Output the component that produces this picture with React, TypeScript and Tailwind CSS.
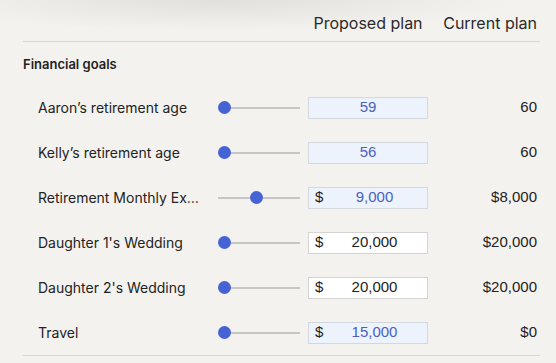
const goals = [
  { label: "Aaron’s retirement age", pos: 0, value: "59", prefix: false, changed: true, current: "60" },
  { label: "Kelly’s retirement age", pos: 0, value: "56", prefix: false, changed: true, current: "60" },
  { label: "Retirement Monthly Expenses", pos: 46, value: "9,000", prefix: true, changed: true, current: "$8,000" },
  { label: "Daughter 1's Wedding", pos: 0, value: "20,000", prefix: true, changed: false, current: "$20,000" },
  { label: "Daughter 2's Wedding", pos: 0, value: "20,000", prefix: true, changed: false, current: "$20,000" },
  { label: "Travel", pos: 0, value: "15,000", prefix: true, changed: true, current: "$0" },
]

const Slider = ({ pos }: { pos: number }) => (
  <div className="relative h-[13px] w-[82px]">
    <div className="absolute left-0 right-0 top-[5.5px] h-[2px] bg-[#c6c6c6]" />
    <div
      className="absolute top-0 h-[13px] w-[13px] rounded-full bg-[#4563d5]"
      style={{ left: `calc(${pos}% * 0.84)` }}
    />
  </div>
)

const GoalRow = ({ goal }: { goal: (typeof goals)[number] }) => (
  <div className="flex h-[45px] items-center pl-[15px] pr-[3px]">
    <div className="w-[162px] truncate text-[14px] text-[#232323]">{goal.label}</div>
    <div className="ml-[18px]">
      <Slider pos={goal.pos} />
    </div>
    <div
      className={`ml-[8px] flex h-[22px] w-[120px] items-center border font-['Liberation_Sans',Arial,sans-serif] text-[15px] ${
        goal.changed
          ? "border-[#d3d7de] bg-[#edf3fd] text-[#4a5fc0]"
          : "border-[#d4d4d4] bg-white text-[#222]"
      }`}
    >
      {goal.prefix && <span className="w-[17px] pl-[6px] text-[#222]">$</span>}
      <span className={`flex-1 text-center ${goal.prefix ? "pr-[4px]" : ""}`}>{goal.value}</span>
    </div>
    <div className="flex-1 text-right font-['Liberation_Sans',Arial,sans-serif] text-[15px] text-[#222]">
      {goal.current}
    </div>
  </div>
)

export default function App() {
  return (
    <div className="relative min-h-screen overflow-hidden bg-[#f4f2ef] pl-[23px] pr-[16px] font-['Inter',sans-serif]">
      <div className="pointer-events-none absolute left-[-80px] top-[-34px] h-[66px] w-[600px] bg-[radial-gradient(ellipse_at_center,rgba(0,0,0,0.08),transparent_70%)]" />
      <div className="relative flex items-center border-b border-[#d8d6d2] pb-[8px] pt-[13px] pr-[3px] text-[16px] leading-[20px] text-[#2a2a2a]">
        <div className="w-[285px]" />
        <div className="w-[120px] text-center">Proposed plan</div>
        <div className="flex-1 text-right">Current plan</div>
      </div>
      <div className="mt-[13px] text-[13px] font-semibold leading-[18px] text-[#1f1f1f]">Financial goals</div>
      <div className="mt-[12px] border-b border-[#d8d6d2]">
        {goals.map((goal) => (
          <GoalRow key={goal.label} goal={goal} />
        ))}
      </div>
    </div>
  )
}
